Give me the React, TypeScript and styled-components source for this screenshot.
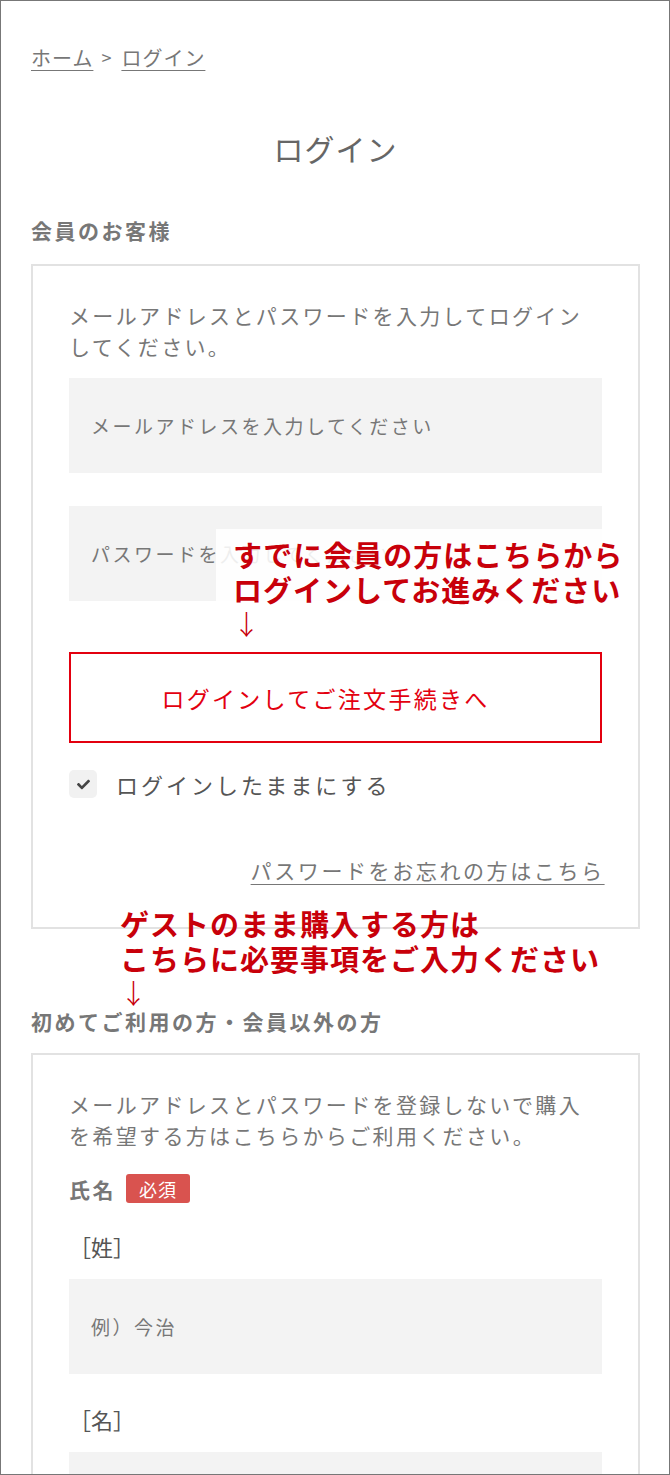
import React from 'react';
import styled, { createGlobalStyle } from 'styled-components';
import { FaCheck } from 'react-icons/fa';

const GlobalStyle = createGlobalStyle`
  * {
    box-sizing: border-box;
  }
  body {
    margin: 0;
    background: #fff;
    font-family: 'Noto Sans CJK JP', 'Noto Sans', sans-serif;
  }
`;

const Frame = styled.div`
  position: relative;
  width: 670px;
  height: 1475px;
  border: 1px solid #777;
  padding: 41px 29px 0 30px;
  overflow: hidden;
  color: #777;
`;

const Breadcrumb = styled.nav`
  display: flex;
  align-items: center;
  height: 30px;
  font-size: 20px;
  letter-spacing: 1px;
  color: #777;
`;

const Crumb = styled.a`
  color: inherit;
  text-decoration: underline;
  text-underline-offset: 4px;
  text-decoration-thickness: 1px;
`;

const Sep = styled.span`
  margin: 0 9px 0 8px;
  font-size: 18px;
`;

const Title = styled.h1`
  margin: 56px 0 0;
  height: 40px;
  line-height: 40px;
  text-align: center;
  font-size: 30px;
  font-weight: 400;
  letter-spacing: 1px;
  color: #666;
`;

const SectionHead = styled.h2<{ $top: number }>`
  margin: ${(p) => p.$top}px 0 0;
  line-height: 31px;
  font-size: 21px;
  font-weight: 700;
  letter-spacing: 2.5px;
  color: #777;
`;

const Panel = styled.section<{ $top: number; $pb: number }>`
  margin-top: ${(p) => p.$top}px;
  border: 2px solid #e2e2e2;
  padding: 34px 36px ${(p) => p.$pb}px;
  display: flex;
  flex-direction: column;
`;

const Lead = styled.p`
  margin: 0;
  font-size: 21px;
  line-height: 31px;
  letter-spacing: 2.35px;
  color: #777;
`;

const Field = styled.input<{ $top: number }>`
  display: block;
  width: 100%;
  height: 95px;
  margin-top: ${(p) => p.$top}px;
  border: none;
  outline: none;
  background: #f3f3f3;
  padding: 0 22px;
  font-family: inherit;
  font-size: 19px;
  letter-spacing: 2.5px;
  color: #555;
  &::placeholder {
    color: #777;
  }
`;

const LoginButton = styled.button`
  margin-top: 51px;
  height: 91px;
  width: 100%;
  border: 2px solid #e3000f;
  background: #fff;
  padding: 0 20px 0 0;
  color: #e3000f;
  font-family: inherit;
  font-size: 23px;
  letter-spacing: 2.3px;
  cursor: pointer;
`;

const KeepRow = styled.label`
  margin-top: 25px;
  display: flex;
  align-items: center;
  gap: 19px;
  font-size: 22px;
  letter-spacing: 3px;
  color: #555;
`;

const CheckBox = styled.span`
  width: 28px;
  height: 28px;
  border-radius: 5px;
  background: #f1f1f1;
  display: flex;
  align-items: center;
  justify-content: center;
  color: #444;
`;

const ForgotLink = styled.a`
  margin-top: 55px;
  align-self: flex-end;
  line-height: 31px;
  font-size: 21px;
  letter-spacing: 2.6px;
  margin-right: -2.6px;
  color: #777;
  text-decoration: underline;
  text-underline-offset: 5px;
  text-decoration-thickness: 1px;
`;

const NameRow = styled.div`
  margin-top: 23px;
  display: flex;
  align-items: center;
  gap: 10px;
  height: 29px;
`;

const NameLabel = styled.span`
  font-size: 21px;
  font-weight: 700;
  color: #777;
  letter-spacing: 2.5px;
`;

const Required = styled.span`
  display: inline-flex;
  align-items: center;
  justify-content: center;
  width: 64px;
  height: 29px;
  border-radius: 3px;
  background: #d9534f;
  color: #fff;
  font-size: 18px;
  letter-spacing: 1px;
`;

const SubLabel = styled.div<{ $top: number }>`
  margin-top: ${(p) => p.$top}px;
  line-height: 31px;
  font-size: 22px;
  color: #555;
`;

const Note = styled.div<{ $left: number; $top: number; $bg?: boolean }>`
  position: absolute;
  left: ${(p) => p.$left}px;
  top: ${(p) => p.$top}px;
  padding: ${(p) => (p.$bg ? '8px 0 0 17px' : '0')};
  width: ${(p) => (p.$bg ? '387px' : 'auto')};
  background: ${(p) => (p.$bg ? 'rgba(255, 255, 255, 0.88)' : 'transparent')};
  color: #c8000a;
`;

const NoteText = styled.p`
  margin: 0;
  font-size: 29px;
  font-weight: 700;
  line-height: 35px;
  letter-spacing: 1px;
  white-space: nowrap;
`;

const NoteArrow = styled.div`
  font-size: 27px;
  font-weight: 300;
  line-height: 28px;
  margin: 3px 0 0 0;
`;

export default function App() {
  return (
    <>
      <GlobalStyle />
      <Frame>
        <Breadcrumb>
          <Crumb href="#">ホーム</Crumb>
          <Sep>&gt;</Sep>
          <Crumb href="#">ログイン</Crumb>
        </Breadcrumb>

        <Title>ログイン</Title>

        <SectionHead $top={47}>会員のお客様</SectionHead>
        <Panel $top={18} $pb={41}>
          <Lead>メールアドレスとパスワードを入力してログインしてください。</Lead>
          <Field $top={16} type="email" placeholder="メールアドレスを入力してください" />
          <Field $top={33} type="password" placeholder="パスワードを入力してください" />
          <LoginButton type="button">ログインしてご注文手続きへ</LoginButton>
          <KeepRow>
            <CheckBox>
              <FaCheck size={13} />
            </CheckBox>
            ログインしたままにする
          </KeepRow>
          <ForgotLink href="#">パスワードをお忘れの方はこちら</ForgotLink>
        </Panel>

        <SectionHead $top={77}>初めてご利用の方・会員以外の方</SectionHead>
        <Panel $top={16} $pb={40}>
          <Lead>メールアドレスとパスワードを登録しないで購入を希望する方はこちらからご利用ください。</Lead>
          <NameRow>
            <NameLabel>氏名</NameLabel>
            <Required>必須</Required>
          </NameRow>
          <SubLabel $top={28}>［姓］</SubLabel>
          <Field $top={17} type="text" placeholder="例）今治" />
          <SubLabel $top={30}>［名］</SubLabel>
          <Field $top={17} type="text" placeholder="例）太郎" />
        </Panel>

        <Note $left={215} $top={528} $bg>
          <NoteText>すでに会員の方はこちらから</NoteText>
          <NoteText>ログインしてお進みください</NoteText>
          <NoteArrow>↓</NoteArrow>
        </Note>

        <Note $left={119} $top={905}>
          <NoteText>ゲストのまま購入する方は</NoteText>
          <NoteText>こちらに必要事項をご入力ください</NoteText>
          <NoteArrow>↓</NoteArrow>
        </Note>
      </Frame>
    </>
  );
}
